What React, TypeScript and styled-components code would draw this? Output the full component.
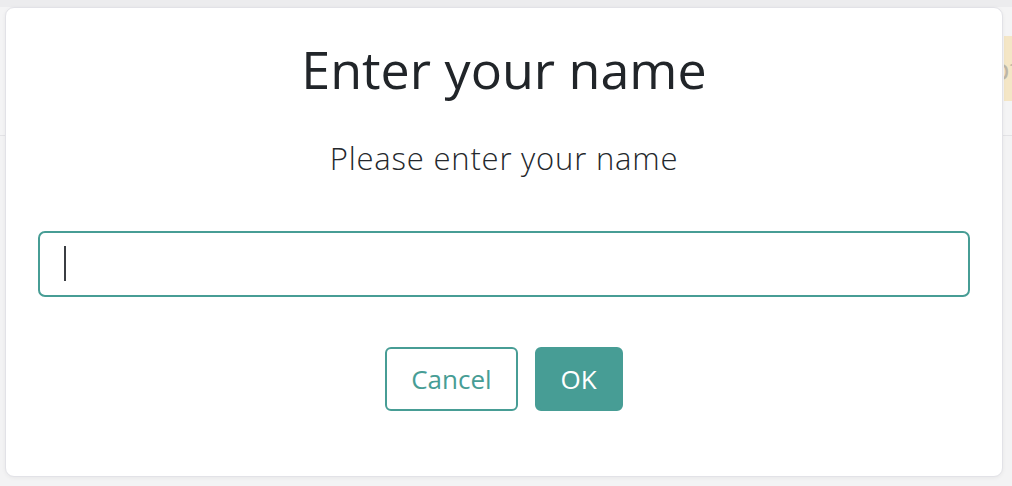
import styled, {createGlobalStyle} from "styled-components";
import {useState} from "react";

const teal = "#479d95";

const GlobalStyle = createGlobalStyle`
  html, body {
    margin: 0;
    padding: 0;
    background: #f3f3f4;
    font-family: "Open Sans", "Noto Sans", sans-serif;
  }
  * {
    box-sizing: border-box;
  }
`;

const NameDialog = () => {
    const [name, setName] = useState("");

    return (
        <Page>
            <GlobalStyle/>
            <TopStrip/>
            <Header>
                <Notice>Options</Notice>
            </Header>
            <Modal>
                <Title>Enter your name</Title>
                <Subtitle>Please enter your name</Subtitle>
                <InputWrap>
                    <NameInput value={name} onChange={(e) => setName(e.target.value)}/>
                    {!name && <Caret/>}
                </InputWrap>
                <Actions>
                    <Button $primary={false}>Cancel</Button>
                    <Button $primary>OK</Button>
                </Actions>
            </Modal>
        </Page>
    );
};

const Page = styled.div`
  position: relative;
  width: 100%;
  height: 486px;
  overflow: hidden;
  background: #f3f3f4;
`;

const TopStrip = styled.div`
  height: 7px;
  background: #ececee;
`;

const Header = styled.div`
  height: 129px;
  display: flex;
  justify-content: flex-end;
  align-items: flex-start;
  padding-top: 29px;
  border-bottom: 1px solid #e3e3e6;
  background: #f4f4f5;
`;

const Notice = styled.div`
  width: 200px;
  height: 65px;
  margin-right: -192px;
  background: #f4e6c6;
  color: #bdb6a6;
  font-size: 30px;
  line-height: 65px;
  text-indent: -36px;
  overflow: hidden;
  white-space: nowrap;
`;

const Modal = styled.div`
  position: absolute;
  top: 7px;
  left: 5px;
  width: 998px;
  height: 470px;
  background: #ffffff;
  border: 1px solid #e2e2e7;
  border-radius: 9px;
  box-shadow: 0 1px 4px rgba(0, 0, 0, 0.05);
  display: flex;
  flex-direction: column;
  align-items: center;
  padding: 30px 32px 0;
`;

const Title = styled.h1`
  margin: 0;
  font-size: 52px;
  font-weight: 400;
  line-height: 62px;
  color: #212529;
`;

const Subtitle = styled.p`
  margin: 36px 0 0;
  font-size: 31px;
  font-weight: 300;
  letter-spacing: 0.8px;
  line-height: 44px;
  color: #24282c;
`;

const InputWrap = styled.div`
  position: relative;
  width: 100%;
  margin-top: 51px;
`;

const NameInput = styled.input`
  display: block;
  width: 100%;
  height: 66px;
  border: 2px solid ${teal};
  border-radius: 7px;
  padding: 0 24px;
  font-family: inherit;
  font-size: 26px;
  color: #212529;
  outline: none;
  background: #fff;
`;

const Caret = styled.span`
  position: absolute;
  left: 26px;
  top: 15px;
  width: 2px;
  height: 35px;
  background: #3b3e43;
  pointer-events: none;
`;

const Actions = styled.div`
  display: flex;
  gap: 17px;
  margin-top: 50px;
`;

const Button = styled.button<{ $primary: boolean }>`
  height: 64px;
  padding: 0 24px;
  border: 2px solid ${teal};
  border-radius: 6px;
  background: ${({$primary}) => ($primary ? teal : "#ffffff")};
  color: ${({$primary}) => ($primary ? "#ffffff" : teal)};
  font-family: inherit;
  font-size: 26px;
  cursor: pointer;

  &:hover {
    opacity: 0.85;
  }
`;

export default NameDialog;
